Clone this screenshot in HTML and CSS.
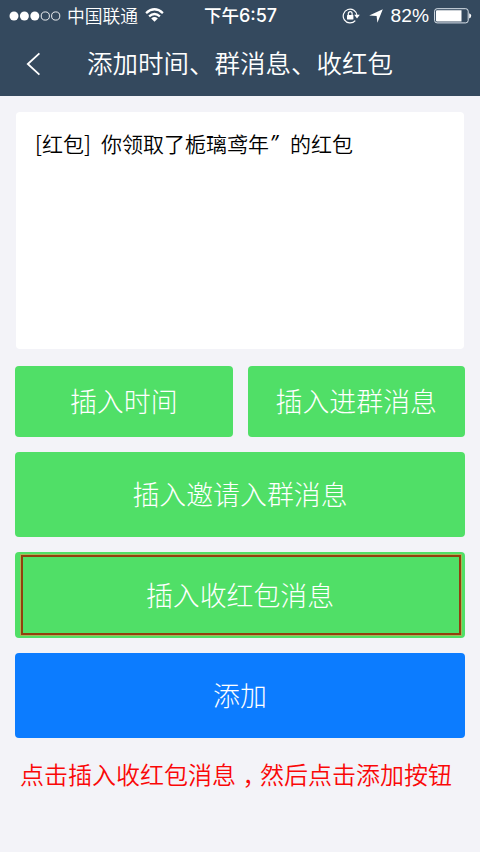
FILE: index.html
```html
<!DOCTYPE html>
<html lang="zh-CN">
<head>
<meta charset="utf-8">
<title>添加时间、群消息、收红包</title>
<link rel="stylesheet" href="styles.css">
</head>
<body>
<header class="header">
  <div class="status">
    <div class="carrier">
      <svg class="signal" width="52" height="12" viewBox="0 0 52 12"><g fill="#fff"><circle cx="5" cy="6" r="4.5"/><circle cx="15.4" cy="6" r="4.5"/><circle cx="25.8" cy="6" r="4.5"/></g><g fill="none" stroke="#fff" stroke-width=".9"><circle cx="36.3" cy="6" r="4.1"/><circle cx="46.7" cy="6" r="4.1"/></g></svg>
      <span class="network">中国联通</span>
      <svg class="wifi" width="19" height="14" viewBox="0 0 19 14"><g fill="none" stroke="#fff" stroke-width="2.3"><path d="M1.1 5.1Q9.5-2.5 17.9 5.1"/><path d="M4.1 8.4Q9.5 3.6 14.9 8.4"/></g><path d="M6.2 10.5Q9.5 7.7 12.8 10.5L9.5 13.7z" fill="#fff"/></svg>
    </div>
    <span class="clock"><span class="period">下午</span>6:57</span>
    <div class="indicators">
      <svg class="lock" width="18" height="16" viewBox="0 0 18 16"><path d="M13.3 12.6A6.9 6.9 0 1 1 15 7.5" fill="none" stroke="#fff" stroke-width="1.2"/><path d="M12.2 6.8H17.8L15 10.4z" fill="#fff"/><rect x="5" y="7" width="6.4" height="4.6" rx=".5" fill="#fff"/><path d="M6.3 7V5.6a1.9 1.9 0 0 1 3.8 0V7" fill="none" stroke="#fff" stroke-width="1.2"/></svg>
      <svg class="arrow" width="14" height="14" viewBox="0 0 14 14"><path d="M13.8.2L8.4 13.8L7.6 6.9L.2 6.5z" fill="#fff"/></svg>
      <span class="percent">82%</span>
      <svg class="battery" width="38" height="16" viewBox="0 0 38 16"><rect x=".6" y=".7" width="33.6" height="14.2" rx="2.5" fill="none" stroke="#dce4ec" stroke-width="1"/><path d="M3 2.2h24.5v11.2H3a1 1 0 0 1-1-1V3.2a1 1 0 0 1 1-1z" fill="#fff"/><path d="M35.2 5.2q2 .5 2 2.6t-2 2.6z" fill="#fff"/></svg>
    </div>
  </div>
  <nav class="nav">
    <svg class="back" width="16" height="24" viewBox="0 0 16 24"><path d="M13.4 1.4L1.8 12L13.4 22.6" fill="none" stroke="#fff" stroke-width="1.8"/></svg>
    <h1 class="title">添加时间、群消息、收红包</h1>
  </nav>
</header>
<main class="content">
  <div class="editor"><span class="tag">[红包]</span><span>你领取了栀璃鸢年</span><span class="quote">”</span><span>的红包</span></div>
  <div class="row">
    <button class="btn">插入时间</button>
    <button class="btn">插入进群消息</button>
  </div>
  <button class="btn tall">插入邀请入群消息</button>
  <button class="btn tall marked">插入收红包消息</button>
  <button class="btn tall primary">添加</button>
  <p class="hint"><span>点击插入收红包消息</span><span class="comma">，</span><span>然后点击添加按钮</span></p>
</main>
</body>
</html>
```
FILE: styles.css
```css
* { box-sizing: border-box; }
body {
  margin: 0;
  height: 852px;
  overflow: hidden;
  background: #f3f3f8;
  font-family: "Noto Sans CJK SC", sans-serif;
  font-weight: 350;
}
svg { display: block; flex: none; }
.header { height: 96px; background: #34495e; color: #fff; }
.status {
  height: 32px;
  display: grid;
  grid-template-columns: 1fr auto 1fr;
  align-items: center;
  padding: 0 8px 0 9px;
  white-space: nowrap;
}
.carrier, .indicators { display: flex; align-items: center; }
.indicators { justify-content: flex-end; }
.network { font-size: 17.8px; line-height: 30px; margin: -2px 7px 0 6px; }
.wifi { margin-top: -2px; }
.clock { font: 500 18px/30px Inter, "Noto Sans CJK SC", sans-serif; }
.period { font-size: 17.5px; }
.lock { margin-top: -1px; }
.arrow { margin-left: 9px; margin-right: 8px; }
.percent { font: 400 19.2px/30px "Liberation Sans", sans-serif; margin-right: 5px; }
.nav { height: 64px; display: flex; align-items: center; padding: 0 0 0 26px; }
.back { margin-top: -1px; }
.title { margin: -4px 0 0 45px; font-size: 25.5px; line-height: 38px; font-weight: 350; }
.content { padding: 16px 15px 0; }
.editor {
  height: 237px;
  margin: 0 1px 17px;
  padding: 15px 20px;
  border-radius: 4px;
  background: #fff;
  color: #000;
  font-size: 21px;
  line-height: 32px;
  display: flex;
}
.tag { width: 65px; margin-left: -1px; margin-right: 1px; }
.quote { width: 21px; padding-left: 1px; font-family: "Open Sans", sans-serif; font-weight: 400; font-style: italic; }
.row { display: grid; grid-template-columns: 1fr 1fr; gap: 15px; margin-bottom: 15px; }
.btn {
  display: block;
  width: 100%;
  height: 70.5px;
  padding: 0;
  border: 0;
  border-radius: 4px;
  background: #50df67;
  color: #fff;
  font: 300 26.9px/40px "Noto Sans CJK SC", sans-serif;
}
.tall { height: 85.5px; margin-bottom: 15px; }
.marked { position: relative; }
.marked::after {
  content: "";
  position: absolute;
  inset: 3px 4px 3px 6px;
  border: 2px solid #923f0e;
  outline: 1px solid #a6b756;
}
.primary { background: #0c7cff; margin-bottom: 0; }
.hint { display: flex; margin: 18px 0 0 5px; font-size: 24px; line-height: 36px; color: #fa0808; white-space: nowrap; }
.comma { width: 24px; margin-top: 8px; height: 28px; font-family: "Noto Sans CJK TC", sans-serif; }
```
